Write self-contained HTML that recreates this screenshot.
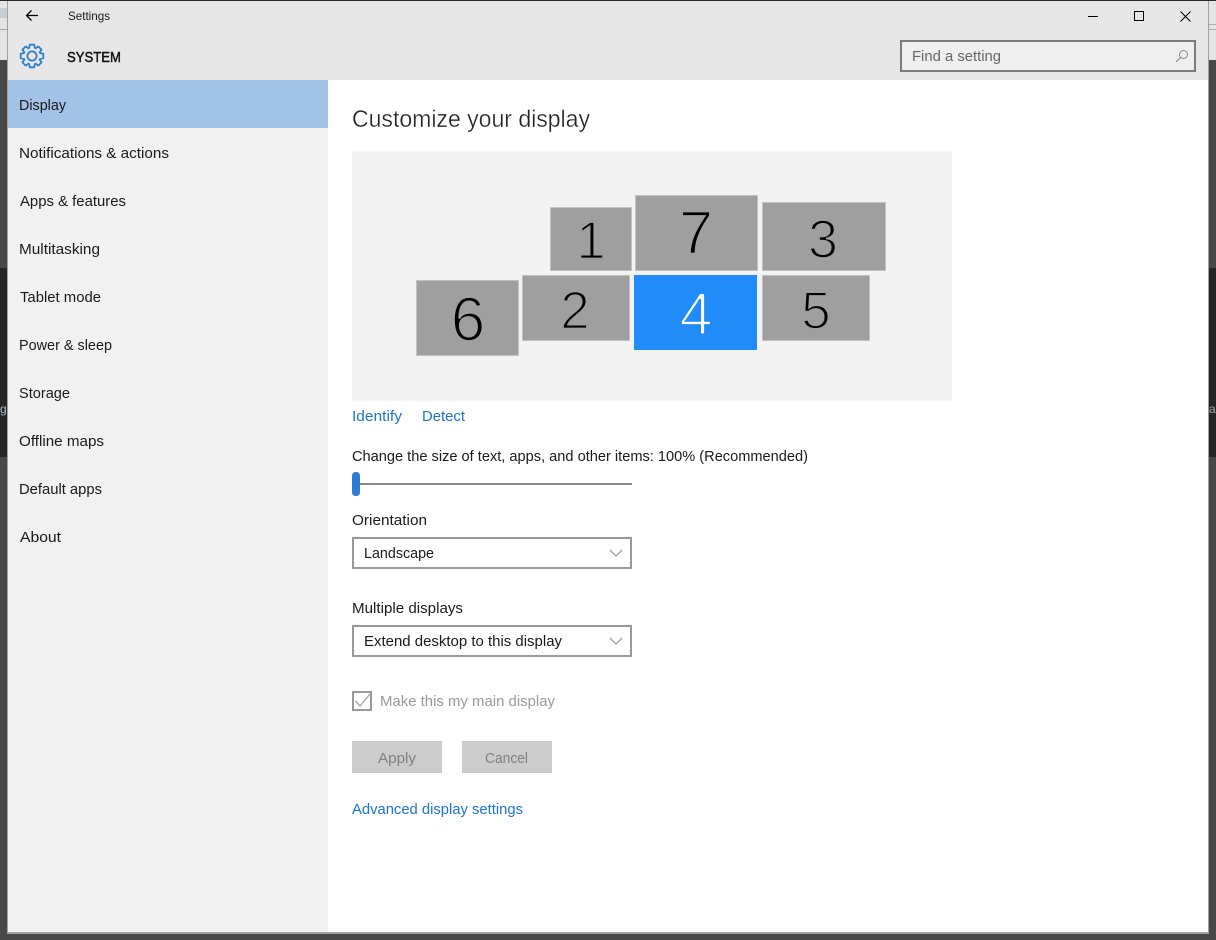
<!DOCTYPE html>
<html><head><meta charset="utf-8"><title>Settings</title>
<style>
html,body{margin:0;padding:0;background:#484848;width:1216px;height:940px;overflow:hidden}
svg{display:block}
text{font-family:"Liberation Sans",sans-serif;font-size:15px;fill:#1a1a1a}
.d{fill:#000;stroke:#9f9f9f;stroke-width:1.8px}
.m{fill:#9f9f9f;stroke:#c2c2c2;stroke-width:1}
.l{fill:#1a73d0}
</style></head><body>
<svg width="1216" height="940" viewBox="0 0 1216 940" xmlns="http://www.w3.org/2000/svg">
<rect width="1216" height="940" fill="#484848"/>
<!-- background behind window -->
<rect x="0" y="0" width="8" height="60" fill="#e4e4e4"/>
<rect x="0" y="8" width="8" height="10" fill="#c9ccd4"/>
<rect x="0" y="29" width="8" height="1" fill="#a8a8a8"/>
<rect x="0" y="268" width="8" height="189" fill="#262626"/>
<text x="0" y="413" style="font-size:12px;fill:#a8bccb">g</text>
<rect x="1208" y="0" width="8" height="60" fill="#e4e4e4"/>
<rect x="1208" y="24" width="8" height="1" fill="#b0b0b0"/>
<rect x="1208" y="29" width="8" height="1" fill="#b0b0b0"/>
<rect x="1208" y="268" width="8" height="189" fill="#262626"/>
<text x="1209" y="413" style="font-size:12px;fill:#a8a8a8">ar</text>
<!-- window -->
<rect x="7" y="0" width="1202" height="934" fill="#a0a0a0"/>
<rect x="0" y="0" width="1216" height="1" fill="#2a2a2a"/>
<rect x="8" y="1" width="1200" height="931" fill="#fff"/>
<rect x="8" y="1" width="1200" height="79" fill="#e6e6e6"/>
<rect x="8" y="80" width="320" height="852" fill="#f1f1f1"/>
<rect x="8" y="80" width="320" height="48" fill="#a2c3e5"/>
<!-- title bar -->
<path d="M38 15.5H26.5M31.5 10.5l-5 5 5 5" fill="none" stroke="#000" stroke-width="1.3"/>
<text x="68" y="20" style="font-size:12px" textLength="42" lengthAdjust="spacingAndGlyphs">Settings</text>
<path d="M1088 16.5h10" stroke="#000" stroke-width="1" fill="none"/>
<rect x="1134.5" y="11.5" width="9" height="9" fill="none" stroke="#000"/>
<path d="M1180.5 11.5l10 10M1190.5 11.5l-10 10" stroke="#000" stroke-width="1" fill="none"/>
<!-- gear -->
<g transform="translate(32 56)" fill="none" stroke="#2b7cd3" stroke-width="1.8" stroke-linejoin="round">
<circle r="4.6"/>
<path d="M-2.9-8L-2.2-11.3H2.2L2.9-8L3.6-7.7L6.4-9.5L9.5-6.4L7.7-3.6L8-2.9L11.3-2.2V2.2L8 2.9L7.7 3.6L9.5 6.4L6.4 9.5L3.6 7.7L2.9 8L2.2 11.3H-2.2L-2.9 8L-3.6 7.7L-6.4 9.5L-9.5 6.4L-7.7 3.6L-8 2.9L-11.3 2.2V-2.2L-8-2.9L-7.7-3.6L-9.5-6.4L-6.4-9.5L-3.6-7.7Z"/>
</g>
<text x="67" y="62" style="font-size:15px;stroke:#111;stroke-width:.45px;fill:#111" textLength="54" lengthAdjust="spacingAndGlyphs">SYSTEM</text>
<!-- search -->
<rect x="901" y="41" width="294" height="30" fill="#efefef" stroke="#7a7a7a" stroke-width="2"/>
<text x="912" y="61" style="fill:#666" textLength="89" lengthAdjust="spacingAndGlyphs">Find a setting</text>
<circle cx="1183.5" cy="54.5" r="4" fill="none" stroke="#8a8a8a" stroke-width="1"/>
<path d="M1180.5 57.5l-4.5 4.5" stroke="#8a8a8a" stroke-width="1.2" fill="none"/>
<!-- sidebar -->
<text x="19" y="110" textLength="47" lengthAdjust="spacingAndGlyphs">Display</text>
<text x="19" y="158" textLength="150" lengthAdjust="spacingAndGlyphs">Notifications &amp; actions</text>
<text x="20" y="206" textLength="106" lengthAdjust="spacingAndGlyphs">Apps &amp; features</text>
<text x="19" y="254" textLength="81" lengthAdjust="spacingAndGlyphs">Multitasking</text>
<text x="20" y="302" textLength="81" lengthAdjust="spacingAndGlyphs">Tablet mode</text>
<text x="19" y="350" textLength="93" lengthAdjust="spacingAndGlyphs">Power &amp; sleep</text>
<text x="19" y="398" textLength="51" lengthAdjust="spacingAndGlyphs">Storage</text>
<text x="19" y="446" textLength="85" lengthAdjust="spacingAndGlyphs">Offline maps</text>
<text x="19" y="494" textLength="83" lengthAdjust="spacingAndGlyphs">Default apps</text>
<text x="20" y="542" textLength="41" lengthAdjust="spacingAndGlyphs">About</text>
<!-- content -->
<text x="352" y="127" style="font-size:24px;fill:#222;stroke:#fff;stroke-width:.35px" textLength="238" lengthAdjust="spacingAndGlyphs">Customize your display</text>
<rect x="352" y="151" width="600" height="250" fill="#f3f3f3"/>
<rect class="m" x="550.5" y="207.5" width="81" height="63"/>
<rect class="m" x="635.5" y="195.5" width="122" height="75"/>
<rect class="m" x="762.5" y="202.5" width="123" height="68"/>
<rect class="m" x="416.5" y="280.5" width="102" height="75"/>
<rect class="m" x="522.5" y="275.5" width="107" height="65"/>
<rect x="634" y="275" width="123" height="75" fill="#208bf9"/>
<rect class="m" x="762.5" y="275.5" width="107" height="65"/>
<text class="d" x="591" y="258.5" text-anchor="middle" style="font-size:53px">1</text>
<text class="d" x="696" y="253.5" text-anchor="middle" style="font-size:61px">7</text>
<text class="d" x="823" y="257.5" text-anchor="middle" style="font-size:54px">3</text>
<text class="d" x="468" y="340.5" text-anchor="middle" style="font-size:62px">6</text>
<text class="d" x="575" y="328.5" text-anchor="middle" style="font-size:53px">2</text>
<text class="d" x="696" y="334.5" text-anchor="middle" style="font-size:59px;fill:#fff;stroke:#208bf9">4</text>
<text class="d" x="816" y="328.5" text-anchor="middle" style="font-size:53px">5</text>
<text class="l" x="352" y="421" textLength="50" lengthAdjust="spacingAndGlyphs">Identify</text>
<text class="l" x="422" y="421" textLength="43" lengthAdjust="spacingAndGlyphs">Detect</text>
<text x="352" y="461" textLength="456" lengthAdjust="spacingAndGlyphs">Change the size of text, apps, and other items: 100% (Recommended)</text>
<rect x="352" y="483" width="280" height="2" fill="#8a8a8a"/>
<rect x="352" y="472" width="8" height="24" rx="3.5" fill="#2b7cd3"/>
<text x="352" y="525" textLength="75" lengthAdjust="spacingAndGlyphs">Orientation</text>
<rect x="353" y="538" width="278" height="30" fill="#fff" stroke="#999" stroke-width="2"/>
<text x="364" y="558" textLength="70" lengthAdjust="spacingAndGlyphs">Landscape</text>
<path d="M610 550l6 6 6-6" fill="none" stroke="#8a8a8a" stroke-width="1"/>
<text x="352" y="613" textLength="111" lengthAdjust="spacingAndGlyphs">Multiple displays</text>
<rect x="353" y="626" width="278" height="30" fill="#fff" stroke="#999" stroke-width="2"/>
<text x="364" y="646" textLength="198" lengthAdjust="spacingAndGlyphs">Extend desktop to this display</text>
<path d="M610 638l6 6 6-6" fill="none" stroke="#8a8a8a" stroke-width="1"/>
<rect x="353" y="692" width="18" height="18" fill="#fff" stroke="#999" stroke-width="2"/>
<path d="M355.5 701l4.5 5 10-12" fill="none" stroke="#999" stroke-width="1.1"/>
<text x="380" y="706" style="fill:#999" textLength="175" lengthAdjust="spacingAndGlyphs">Make this my main display</text>
<rect x="352" y="741" width="90" height="32" fill="#ccc"/>
<rect x="462" y="741" width="90" height="32" fill="#ccc"/>
<text x="378" y="763" style="fill:#808080" textLength="38" lengthAdjust="spacingAndGlyphs">Apply</text>
<text x="485" y="763" style="fill:#808080" textLength="43" lengthAdjust="spacingAndGlyphs">Cancel</text>
<text class="l" x="352" y="814" textLength="171" lengthAdjust="spacingAndGlyphs">Advanced display settings</text>
</svg>
</body></html>
